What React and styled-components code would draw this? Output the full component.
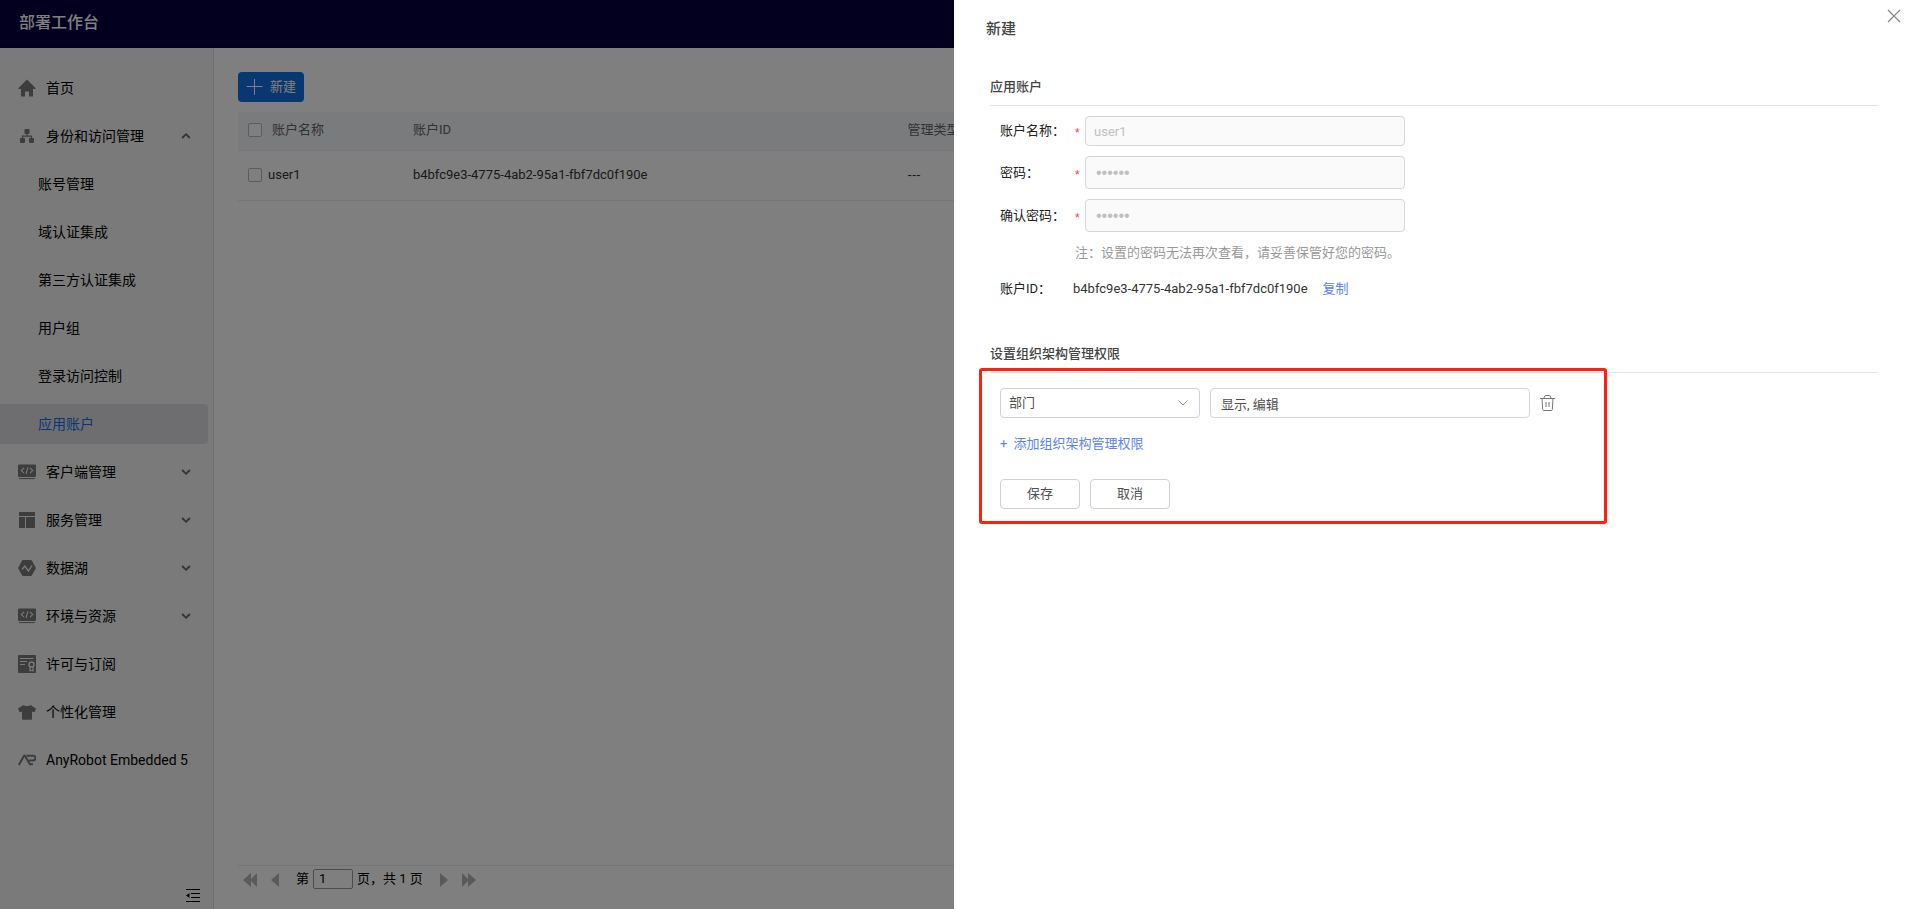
import React, { useState } from "react";
import styled, { createGlobalStyle, css } from "styled-components";

const GlobalStyle = createGlobalStyle`
  *,
  *::after {
    box-sizing: border-box;
  }

  body {
    margin: 0;
    background: #fff;
    color: #000;
    font-family: Roboto, "Noto Sans CJK SC", sans-serif;
    font-size: 13px;
    line-height: 20px;
  }

  button,
  input,
  select {
    font: inherit;
    color: inherit;
    margin: 0;
  }

  svg {
    flex: none;
  }
`;

/* ---------- icons ---------- */

const HomeIcon = () => (
  <svg width="18" height="18" viewBox="0 0 18 18" fill="currentColor">
    <path d="M9 0.5 17.5 9v1H15v7.5h-4V12.5H7v5H3V10H.5V9z" />
  </svg>
);

const OrgIcon = () => (
  <svg width="18" height="18" viewBox="0 0 18 18" fill="currentColor">
    <rect x="6.5" y="2" width="5" height="5" rx="1" />
    <rect x="2" y="11" width="5" height="5" rx="1" />
    <rect x="11" y="11" width="5" height="5" rx="1" />
    <path d="M9 6v3.2M4.500 11.500V9.200h9v2.300" fill="none" stroke="currentColor" strokeWidth="1.2" />
  </svg>
);

const CodeIcon = () => (
  <svg width="18" height="18" viewBox="0 0 18 18" fill="currentColor">
    <rect x="0" y="1.500" width="18" height="12.500" rx="1" />
    <path d="M1 15.600h16" stroke="currentColor" />
    <path
      d="M6 5 3.300 7.600 6 10.200M12 5l2.700 2.600L12 10.200M10 4.300 8 11"
      fill="none"
      stroke="#f4f4f4"
      strokeWidth="1.1"
    />
  </svg>
);

const LayoutIcon = () => (
  <svg width="18" height="18" viewBox="0 0 18 18" fill="currentColor">
    <path d="M1 1h16v4H1zM1 6h6v11H1zM8 6h9v11H8z" />
  </svg>
);

const LakeIcon = () => (
  <svg width="18" height="18" viewBox="0 0 18 18" fill="currentColor">
    <path d="M5 1h8a1 1 0 0 1 .8.500L17.700 8.500a1 1 0 0 1 0 1L13.800 16.500a1 1 0 0 1-.8.500H5a1 1 0 0 1-.8-.5L.3 9.500a1 1 0 0 1 0-1L4.200 1.500A1 1 0 0 1 5 1z" />
    <path d="M4 10.500 6.800 7l3.600 5 3.600-5.500" fill="none" stroke="#f4f4f4" strokeWidth="1.3" />
  </svg>
);

const LicenseIcon = () => (
  <svg width="18" height="18" viewBox="0 0 18 18" fill="currentColor">
    <rect width="18" height="18" rx="1" />
    <path d="M2 3.500h13.500M2 6.500h7M2 9.500h5" stroke="#f4f4f4" />
    <circle cx="13.500" cy="9.500" r="2.500" fill="none" stroke="#f4f4f4" strokeWidth="1.4" />
    <path d="M12 12v4.500M15 12v4.500M12 15.500h3" stroke="#f4f4f4" strokeWidth="1.2" />
  </svg>
);

const ShirtIcon = () => (
  <svg width="18" height="18" viewBox="0 0 18 18" fill="currentColor">
    <path d="M5.500 2c1.500 1.300 5.500 1.300 7 0L18 5.500l-1.500 3.700L14 8.500V16q0 .8-.8.800H4.800Q4 16.800 4 16V8.500l-2.500.7L0 5.500z" />
  </svg>
);

const RobotIcon = () => (
  <svg width="18" height="18" viewBox="0 0 18 18" fill="none" stroke="currentColor" strokeWidth="2">
    <path d="M.8 14 5.800 5.200Q6.500 4 7.200 5.200L12 13.200H15" />
    <path d="M8.500 4.700h6.500a2 2 0 0 1 0 4.800H11" />
  </svg>
);

const Chevron = ({ up }) => (
  <svg width="10" height="8" viewBox="0 0 10 8" fill="none" stroke="#666" strokeWidth="1.8">
    <path d={up ? "M1.200 6 5 2.200 8.800 6" : "M1.200 2 5 5.800 8.800 2"} />
  </svg>
);

const CollapseIcon = () => (
  <svg width="16" height="16" viewBox="0 0 16 16" fill="none" stroke="#000">
    <path d="M1 1.500h14M6 5.500h9M6 9.500h9M1 13.500h14" />
    <path d="M4.500 5v5L1 7.500z" fill="#000" stroke="none" />
  </svg>
);

const PlusIcon = () => (
  <svg width="18" height="18" viewBox="0 0 18 18" stroke="#fff">
    <path d="M8.500 1v16M.5 8.500h16" />
  </svg>
);

const CloseIcon = () => (
  <svg width="14" height="14" viewBox="0 0 14 14" stroke="#82869a" strokeWidth="1.2">
    <path d="M1 1l12 12M13 1 1 13" />
  </svg>
);

const TrashIcon = () => (
  <svg width="16" height="18" viewBox="0 0 16 18" fill="none" stroke="#777">
    <path d="M0 4.500h15M4 4Q4.300 1.500 6 1.500h3Q10.700 1.500 11 4" />
    <path d="M2 4.500 2.700 15.500q.1 1 1 1h7.600q.9 0 1-1L13 4.500M6 8v5M9 8v5" />
  </svg>
);

const ArrowIcon = ({ right, double }) => (
  <svg
    width={double ? 14 : 8}
    height="14"
    viewBox={double ? "0 0 14 14" : "0 0 8 14"}
    fill="#b4b4b4"
  >
    {right ? (
      <path d={double ? "M0 0l7 7-7 7zM6 0l8 7-8 7z" : "M0 0l8 7-8 7z"} />
    ) : (
      <path d={double ? "M8 0 0 7l8 7zM14 0 7 7l7 7z" : "M8 0 0 7l8 7z"} />
    )}
  </svg>
);

/* ---------- data ---------- */

const accountId = "b4bfc9e3-4775-4ab2-95a1-fbf7dc0f190e";

const menu = [
  { label: "首页", icon: HomeIcon },
  {
    label: "身份和访问管理",
    icon: OrgIcon,
    open: true,
    children: ["账号管理", "域认证集成", "第三方认证集成", "用户组", "登录访问控制", "应用账户"],
  },
  { label: "客户端管理", icon: CodeIcon, open: false },
  { label: "服务管理", icon: LayoutIcon, open: false },
  { label: "数据湖", icon: LakeIcon, open: false },
  { label: "环境与资源", icon: CodeIcon, open: false },
  { label: "许可与订阅", icon: LicenseIcon },
  { label: "个性化管理", icon: ShirtIcon },
  { label: "AnyRobot Embedded 5", icon: RobotIcon },
];

/* ---------- page ---------- */

const Sidebar = () => (
  <Side>
    <Menu>
      {menu.map(({ label, icon: Icon, open, children }) => (
        <React.Fragment key={label}>
          <MenuItem href="#">
            <Icon />
            <MenuLabel>{label}</MenuLabel>
            {open !== undefined ? <Chevron up={open} /> : null}
          </MenuItem>
          {children
            ? children.map((child) => (
                <MenuItem key={child} href="#" $sub $active={child === "应用账户"}>
                  <MenuLabel>{child}</MenuLabel>
                </MenuItem>
              ))
            : null}
        </React.Fragment>
      ))}
    </Menu>
    <CollapseButton type="button" aria-label="收起">
      <CollapseIcon />
    </CollapseButton>
  </Side>
);

const Accounts = () => (
  <Main>
    <PrimaryButton type="button">
      <PlusIcon />
      新建
    </PrimaryButton>
    <Table>
      <thead>
        <tr>
          <Th $width="10%">
            <CheckCell>
              <Checkbox type="checkbox" aria-label="全选" />
              账户名称
            </CheckCell>
          </Th>
          <Th $width="30%">账户ID</Th>
          <Th>管理类型</Th>
        </tr>
      </thead>
      <tbody>
        <tr>
          <Td>
            <CheckCell $tight>
              <Checkbox type="checkbox" aria-label="user1" />
              user1
            </CheckCell>
          </Td>
          <Td>{accountId}</Td>
          <EmptyTd>---</EmptyTd>
        </tr>
      </tbody>
    </Table>
    <Pager>
      <PagerButton type="button" aria-label="第一页">
        <ArrowIcon double />
      </PagerButton>
      <PagerButton type="button" aria-label="上一页">
        <ArrowIcon />
      </PagerButton>
      <PagerText>
        第
        <PageInput aria-label="页码" defaultValue="1" />
        <span>页，共 1 页</span>
      </PagerText>
      <PagerButton type="button" aria-label="下一页">
        <ArrowIcon right />
      </PagerButton>
      <PagerButton type="button" aria-label="最后一页">
        <ArrowIcon right double />
      </PagerButton>
    </Pager>
  </Main>
);

const AccountDrawer = () => {
  const [scope, setScope] = useState("部门");

  return (
    <Drawer role="dialog" aria-label="新建">
      <CloseButton type="button" aria-label="关闭">
        <CloseIcon />
      </CloseButton>
      <DrawerTitle>新建</DrawerTitle>

      <SectionTitle>应用账户</SectionTitle>
      <Fields>
        <Field>
          <Label htmlFor="name">账户名称：</Label>
          <Required>*</Required>
          <TextInput id="name" defaultValue="user1" disabled />
        </Field>
        <Field>
          <Label htmlFor="password">密码：</Label>
          <Required>*</Required>
          <PasswordInput id="password" type="password" defaultValue="123456" disabled />
        </Field>
        <Field>
          <Label htmlFor="confirm">确认密码：</Label>
          <Required>*</Required>
          <PasswordInput id="confirm" type="password" defaultValue="123456" disabled />
        </Field>
        <Note>注：设置的密码无法再次查看，请妥善保管好您的密码。</Note>
        <IdRow>
          <IdLabel>账户ID：</IdLabel>
          <IdValue>{accountId}</IdValue>
          <LinkButton type="button">复制</LinkButton>
        </IdRow>
      </Fields>

      <SectionTitle>设置组织架构管理权限</SectionTitle>
      <Permissions>
        <PermissionRow>
          <SelectWrap>
            <Select
              aria-label="权限范围"
              value={scope}
              onChange={(e) => setScope(e.target.value)}
            >
              <option>部门</option>
            </Select>
            <svg width="10" height="6" viewBox="0 0 10 6" fill="none" stroke="#999">
              <path d="M.5.500 5 5 9.500.5" />
            </svg>
          </SelectWrap>
          <PermissionInput aria-label="权限" defaultValue="显示, 编辑" />
          <IconButton type="button" aria-label="删除">
            <TrashIcon />
          </IconButton>
        </PermissionRow>
        <LinkButton type="button">
          <span>+</span>
          添加组织架构管理权限
        </LinkButton>
        <Actions>
          <Button type="button">保存</Button>
          <Button type="button">取消</Button>
        </Actions>
      </Permissions>
    </Drawer>
  );
};

const App = () => (
  <Page>
    <GlobalStyle />
    <Header>部署工作台</Header>
    <Body>
      <Sidebar />
      <Accounts />
    </Body>
    <Mask />
    <AccountDrawer />
  </Page>
);

export default App;

/* ---------- styles ---------- */

const Page = styled.div`
  display: flex;
  flex-direction: column;
  height: 100vh;
  overflow: hidden;
`;

const Header = styled.header`
  flex: none;
  height: 48px;
  padding: 0 19px;
  background: #04003c;
  color: #fff;
  font-size: 16px;
  font-weight: 500;
  line-height: 45px;
`;

const Body = styled.div`
  flex: 1;
  display: flex;
  min-height: 0;
`;

const Side = styled.aside`
  flex: none;
  display: flex;
  flex-direction: column;
  justify-content: space-between;
  width: 214px;
  padding: 20px 5px 5px 0;
  background: #f4f4f4;
  border-right: 1px solid #dcdcdc;
`;

const Menu = styled.nav`
  display: flex;
  flex-direction: column;
  gap: 8px;
`;

const MenuItem = styled.a`
  display: flex;
  align-items: center;
  gap: 10px;
  height: 40px;
  padding: 0 17px 0 18px;
  border-radius: 0 4px 4px 0;
  color: #7a7a7a;
  font-size: 14px;
  text-decoration: none;

  ${(props) =>
    props.$sub &&
    css`
      padding-left: 38px;
    `}

  ${(props) =>
    props.$active &&
    css`
      background: #dcdde2;
    `}

  span {
    color: ${(props) => (props.$active ? "#126ee3" : "#000")};
  }
`;

const MenuLabel = styled.span`
  flex: 1;
  white-space: nowrap;
`;

const CollapseButton = styled.button`
  align-self: flex-end;
  display: flex;
  margin-right: 7px;
  padding: 0;
  border: 0;
  background: none;
`;

const Main = styled.main`
  flex: 1;
  display: flex;
  flex-direction: column;
  align-items: stretch;
  min-width: 0;
  padding: 24px 24px 15px;
`;

const PrimaryButton = styled.button`
  align-self: flex-start;
  display: flex;
  align-items: center;
  gap: 6px;
  height: 30px;
  padding: 0 8px;
  border: 0;
  border-radius: 4px;
  background: #126ee3;
  color: #fff;
`;

const Table = styled.table`
  width: 100%;
  margin-top: 10px;
  border-collapse: collapse;
  table-layout: fixed;
  text-align: left;
`;

const cell = css`
  padding: 0 10px;
  border-bottom: 1px solid #ededf0;
`;

const Th = styled.th`
  ${cell}
  width: ${(props) => props.$width || "auto"};
  height: 38px;
  padding-bottom: 2px;
  background: #f5f7fa;
  color: #666;
  font-weight: inherit;
`;

const Td = styled.td`
  ${cell}
  height: 50px;
  color: #333;
`;

const EmptyTd = styled(Td)`
  font-family: "Liberation Sans", sans-serif;
`;

const CheckCell = styled.label`
  display: flex;
  align-items: center;
  gap: ${(props) => (props.$tight ? "6px" : "10px")};
`;

const Checkbox = styled.input`
  appearance: none;
  width: 14px;
  height: 14px;
  border: 1px solid #b8b8bc;
  border-radius: 2px;
  background: #fff;
`;

const Pager = styled.div`
  display: flex;
  align-items: center;
  gap: 14px;
  height: 29px;
  margin-top: auto;
  padding: 0 5px;
  border-top: 1px solid #e6eaed;
`;

const PagerText = styled.span`
  display: flex;
  align-items: center;
  gap: 4px;
  padding: 0 3px 3px;
`;

const PagerButton = styled.button`
  display: flex;
  padding: 0;
  border: 0;
  background: none;
`;

const PageInput = styled.input`
  width: 40px;
  height: 20px;
  padding: 0 5px;
  border: 1px solid #999;
  border-radius: 2px;
`;

const Mask = styled.div`
  position: fixed;
  inset: 0;
  background: rgba(0, 0, 0, 0.5);
`;

const Drawer = styled.section`
  position: fixed;
  top: 0;
  right: 0;
  bottom: 0;
  width: 50%;
  min-width: 957px;
  padding: 17px 33px 0 36px;
  background: #fff;
  color: #222;
`;

const CloseButton = styled.button`
  position: absolute;
  top: 9px;
  right: 10px;
  display: flex;
  padding: 0;
  border: 0;
  background: none;
`;

const DrawerTitle = styled.h1`
  margin: 0 0 25px -4px;
  color: #444;
  font-size: 15px;
  font-weight: 500;
  line-height: 24px;
`;

const SectionTitle = styled.h2`
  height: 40px;
  margin: 0;
  border-bottom: 1px solid #e3e3e9;
  color: #444;
  font-size: 13px;
  font-weight: 500;
  line-height: 42px;
`;

const Fields = styled.div`
  display: flex;
  flex-direction: column;
  gap: 10px;
  padding: 10px 10px 35px;
`;

const Field = styled.div`
  display: flex;
  align-items: center;
`;

const Label = styled.label`
  width: 75px;
`;

const Required = styled.span`
  width: 10px;
  padding-top: 4px;
  color: #f04040;
  font-family: "Liberation Sans", sans-serif;
  font-size: 12px;
`;

const TextInput = styled.input`
  width: 320px;
  height: 30px;
  padding: 0 8px;
  border: 1px solid #d5d5de;
  border-radius: 4px;
  background: #fff;
  color: #505050;

  &:disabled {
    background: #fafafa;
    color: #bfbfbf;
  }
`;

const PasswordInput = styled(TextInput)`
  height: 33px;
  padding: 0 10px;
  font-family: "Liberation Sans", sans-serif;
  font-size: 16px;
`;

const PermissionInput = styled(TextInput)`
  padding: 0 10px;
`;

const Note = styled.p`
  height: 20px;
  margin: 0;
  padding-left: 75px;
  color: #999;
  line-height: 22px;
`;

const IdRow = styled.div`
  display: flex;
  height: 26px;
  padding-top: 7px;
`;

const IdLabel = styled.span`
  width: 73px;
`;

const IdValue = styled.span`
  margin-right: 15px;
  color: #333;
`;

const LinkButton = styled.button`
  display: flex;
  gap: 6px;
  height: 20px;
  padding: 0;
  border: 0;
  background: none;
  color: #5b83f5;
`;

const Permissions = styled.div`
  position: relative;
  display: flex;
  flex-direction: column;
  align-items: flex-start;
  gap: 16px;
  padding: 15px 10px;

  &::after {
    content: "";
    position: absolute;
    top: -5px;
    left: -11px;
    width: 628px;
    height: 156px;
    border: 3px solid #ff2010;
    border-radius: 3px;
    pointer-events: none;
  }
`;

const PermissionRow = styled.div`
  display: flex;
  align-items: center;
  gap: 10px;
`;

const SelectWrap = styled.div`
  position: relative;

  svg {
    position: absolute;
    top: 12px;
    right: 12px;
    pointer-events: none;
  }
`;

const Select = styled.select`
  appearance: none;
  width: 200px;
  height: 30px;
  padding: 0 8px;
  border: 1px solid #d0d0da;
  border-radius: 4px;
  background: #fff;
  color: #505050;
`;

const IconButton = styled.button`
  display: flex;
  padding: 0;
  border: 0;
  background: none;
`;

const Actions = styled.div`
  display: flex;
  gap: 10px;
  padding-top: 9px;
`;

const Button = styled.button`
  width: 80px;
  height: 30px;
  padding: 0;
  border: 1px solid #d0d0da;
  border-radius: 4px;
  background: #fff;
  color: #505050;
`;
